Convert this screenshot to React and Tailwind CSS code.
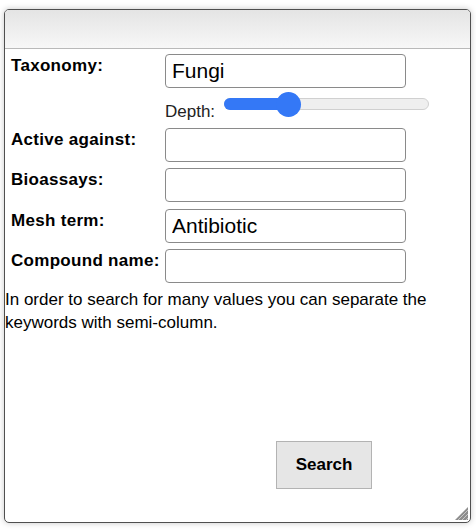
import { useState } from "react";

const FONT = { fontFamily: '"Liberation Sans", Arial, Helvetica, sans-serif' };

function Field({ label, value, className = "" }) {
  return (
    <div className={`flex ${className}`}>
      <label className="w-[160px] shrink-0 pl-[6px] pt-[2px] text-[17px] font-bold leading-[20px] tracking-[0.3px] text-black">
        {label}
      </label>
      <input
        type="text"
        defaultValue={value}
        className="h-[34px] w-[241px] rounded-[4px] border border-[#8a8a8a] bg-white pl-[6px] text-[21px] text-black outline-none"
      />
    </div>
  );
}

function DepthSlider() {
  const [depth] = useState(31);
  return (
    <div className="ml-[160px] mt-[6px] flex h-[28px] items-start">
      <span className="pt-[8px] text-[17px] leading-[20px] text-[#222]">Depth:</span>
      <div className="relative ml-[9px] mt-[4px] h-[12px] w-[205px] rounded-full border border-[#d0d0d0] bg-[#efefef]">
        <div
          className="absolute left-[-1px] top-[-1px] h-[12px] rounded-l-full bg-[#3478f6]"
          style={{ width: `${(depth / 100) * 205}px` }}
        />
        <div
          className="absolute top-[-7.5px] h-[25px] w-[25px] rounded-full bg-[#3478f6]"
          style={{ left: `${(depth / 100) * 205 - 13}px` }}
        />
      </div>
    </div>
  );
}

function ResizeGrip() {
  return (
    <svg className="absolute bottom-[2px] right-[2px]" width="13" height="13" viewBox="0 0 13 13">
      <path d="M13 0 L13 13 L0 13 Z" fill="#8d8d8d" />
      <path d="M13 3 L3 13 M13 7 L7 13 M13 11 L11 13" stroke="#c8c8c8" strokeWidth="1" />
    </svg>
  );
}

export default function App() {
  return (
    <div className="min-h-[530px] bg-white pl-[4px] pt-[9px]" style={FONT}>
      <div className="relative h-[514px] w-[467px] overflow-hidden rounded-[5px] border border-[#4f4f4f] bg-white shadow-[0_0_6px_rgba(0,0,0,0.22)]">
        <div className="h-[39px] border-b border-[#b9b9b9] bg-gradient-to-b from-[#e4e4e4] to-[#f7f7f7]" />
        <div className="flex flex-col pt-[5px]">
          <Field label="Taxonomy:" value="Fungi" />
          <DepthSlider />
          <Field className="mt-[6px]" label="Active against:" value="" />
          <Field className="mt-[6px]" label="Bioassays:" value="" />
          <Field className="mt-[7px]" label="Mesh term:" value="Antibiotic" />
          <Field className="mt-[6px]" label="Compound name:" value="" />
          <p className="mt-[5px] pr-[20px] text-[17px] leading-[23px] text-black">
            In order to search for many values you can separate the keywords with semi-column.
          </p>
          <button className="ml-[271px] mt-[107px] h-[48px] w-[96px] border border-[#b3b3b3] bg-[#e6e6e6] text-[17px] font-bold text-black">
            Search
          </button>
        </div>
        <ResizeGrip />
      </div>
    </div>
  );
}
